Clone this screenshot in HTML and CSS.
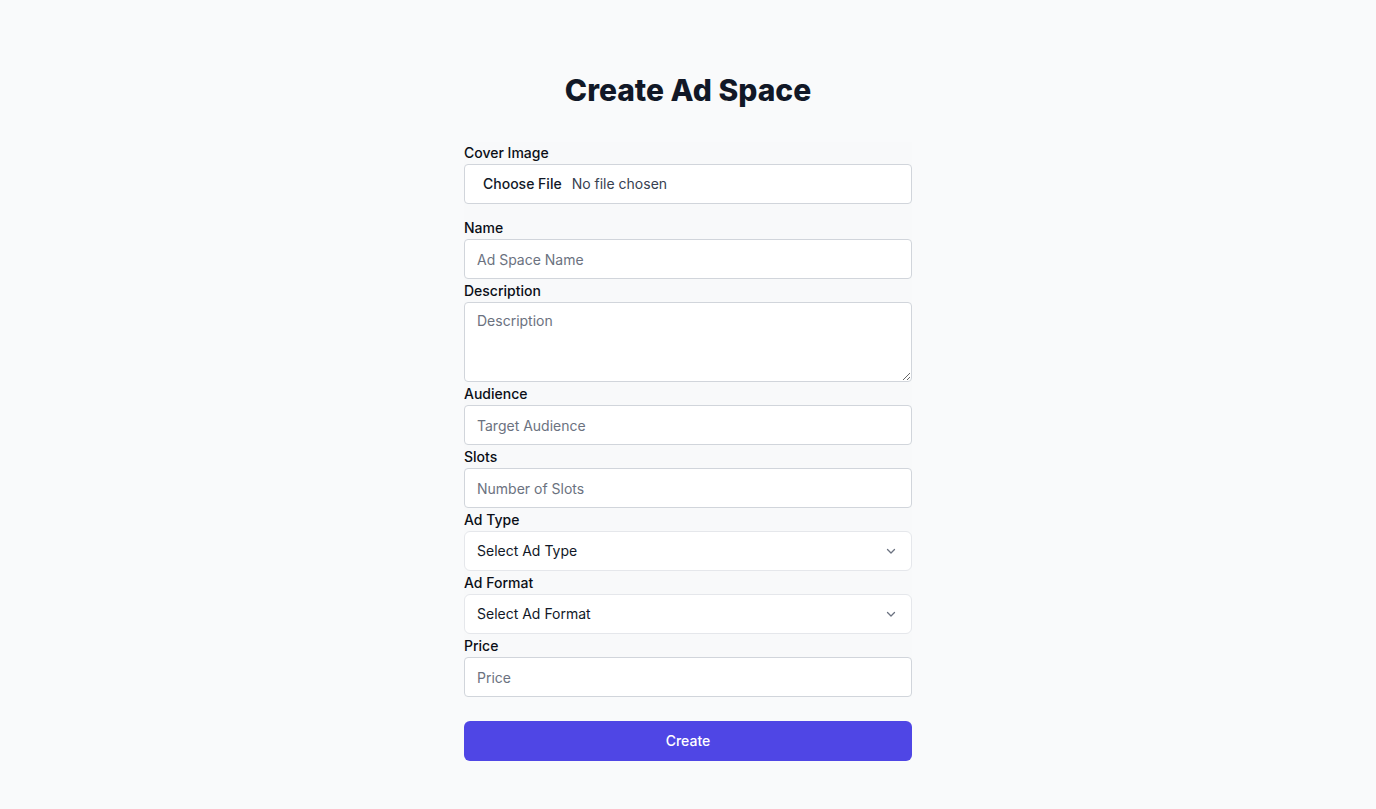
FILE: index.html
```html
<!DOCTYPE html>
<html lang="en">
<head>
<meta charset="utf-8">
<title>Create Ad Space</title>
<link rel="stylesheet" href="styles.css">
</head>
<body>
<main class="page">
  <h1 class="title">Create Ad Space</h1>
  <form class="form">
    <div class="fields">
      <div class="group group-file">
        <label class="label" for="cover">Cover Image</label>
        <input class="file" id="cover" type="file">
      </div>
      <div class="group">
        <label class="label" for="name">Name</label>
        <input class="input" id="name" type="text" placeholder="Ad Space Name">
      </div>
      <div class="group">
        <label class="label" for="desc">Description</label>
        <textarea class="input textarea" id="desc" placeholder="Description"></textarea>
      </div>
      <div class="group">
        <label class="label" for="aud">Audience</label>
        <input class="input" id="aud" type="text" placeholder="Target Audience">
      </div>
      <div class="group">
        <label class="label" for="slots">Slots</label>
        <input class="input" id="slots" type="text" placeholder="Number of Slots">
      </div>
      <div class="group">
        <label class="label" for="type">Ad Type</label>
        <div class="select-wrap">
          <select class="select" id="type"><option>Select Ad Type</option></select>
          <svg class="chev" width="12" height="12" viewBox="0 0 12 12"><path d="M2.5 4.5 L6 8 L9.5 4.5" fill="none" stroke="#6b7280" stroke-width="1.3" stroke-linecap="round" stroke-linejoin="round"/></svg>
        </div>
      </div>
      <div class="group">
        <label class="label" for="format">Ad Format</label>
        <div class="select-wrap">
          <select class="select" id="format"><option>Select Ad Format</option></select>
          <svg class="chev" width="12" height="12" viewBox="0 0 12 12"><path d="M2.5 4.5 L6 8 L9.5 4.5" fill="none" stroke="#6b7280" stroke-width="1.3" stroke-linecap="round" stroke-linejoin="round"/></svg>
        </div>
      </div>
      <div class="group">
        <label class="label" for="price">Price</label>
        <input class="input" id="price" type="text" placeholder="Price">
      </div>
    </div>
    <button class="btn" type="button">Create</button>
  </form>
</main>
</body>
</html>
```
FILE: styles.css
```css
* { box-sizing: border-box; }
html, body { margin: 0; padding: 0; }
body {
  background: #f9fafb;
  font-family: Inter, "Noto Sans", "Liberation Sans", sans-serif;
  color: #111827;
}
.page {
  width: 448px;
  margin: 0 auto;
  padding-top: 72px;
}
.title {
  margin: 0 0 34px;
  font-size: 30px;
  line-height: 36px;
  font-weight: 800;
  text-align: center;
  color: #111827;
}
.form {
  display: flex;
  flex-direction: column;
}
.fields {
  display: flex;
  flex-direction: column;
  gap: 1px;
  background: #f8f9fa;
}
.group {
  display: flex;
  flex-direction: column;
}
.group-file { margin-bottom: 12px; }
.label {
  font-size: 14px;
  line-height: 20px;
  font-weight: 500;
  color: #0b0f17;
  padding-top: 1px;
  margin-bottom: 1px;
}
.input, .file, .select {
  width: 100%;
  height: 40px;
  border: 1px solid #d1d5db;
  border-radius: 4px;
  background: #fff;
  font-family: inherit;
  font-size: 14px;
  line-height: 20px;
  color: #111827;
  padding: 9px 12px;
  outline: none;
}
.input::placeholder { color: #6b7280; opacity: 1; }
.textarea {
  height: 80px;
  resize: vertical;
  display: block;
  padding-top: 8px;
}
.file {
  padding: 9px 12px 9px 10px;
  color: #374151;
}
.file::file-selector-button {
  border: none;
  background: transparent;
  font-family: inherit;
  font-size: 14px;
  font-weight: 500;
  color: #111827;
  padding: 0 8px;
  margin-right: 2px;
}
.select-wrap { position: relative; }
.select {
  -webkit-appearance: none;
  appearance: none;
  border-color: #e5e7eb;
  border-radius: 6px;
  display: block;
}
.chev {
  position: absolute;
  right: 15px;
  top: 14px;
  pointer-events: none;
}
.btn {
  margin-top: 24px;
  height: 40px;
  width: 100%;
  border: none;
  border-radius: 6px;
  background: #4f46e5;
  color: #fff;
  font-family: inherit;
  font-size: 14px;
  font-weight: 500;
  padding: 0 0 2px;
}
```
